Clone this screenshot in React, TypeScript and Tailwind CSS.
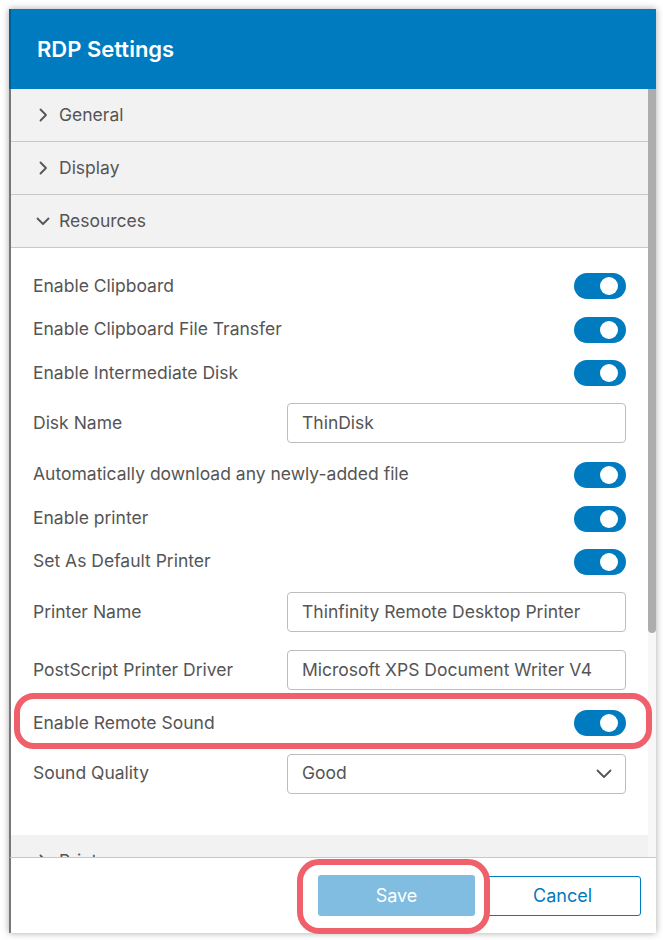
import React from "react";

const font = { fontFamily: "Inter, 'Noto Sans', sans-serif" };

function Chevron({ down = false }: { down?: boolean }) {
  return (
    <svg width="14" height="14" viewBox="0 0 14 14" fill="none" stroke="#555" strokeWidth="1.8" strokeLinecap="round" strokeLinejoin="round">
      {down ? <path d="M1.5 4.5 L7 10 L12.5 4.5" /> : <path d="M4.5 1.5 L10 7 L4.5 12.5" />}
    </svg>
  );
}

function AccHeader({ title, open = false }: { title: string; open?: boolean }) {
  return (
    <div className="h-[53px] shrink-0 bg-[#f2f2f2] border-b border-[#c8c8c8] flex items-center pl-[25px] gap-[9px] text-[17.5px] text-[#555]">
      <Chevron down={open} />
      <span>{title}</span>
    </div>
  );
}

function Toggle() {
  return (
    <div className="w-[52px] h-[26px] rounded-full bg-[#007bc0] flex items-center justify-end pr-[8px]">
      <div className="w-[18px] h-[18px] rounded-full bg-white" />
    </div>
  );
}

function ToggleRow({ label, h }: { label: string; h: string }) {
  return (
    <div className={`flex items-center justify-between ${h}`}>
      <span className="text-[17.5px] text-[#555]">{label}</span>
      <Toggle />
    </div>
  );
}

function InputRow({ label, value, h }: { label: string; value: string; h: string }) {
  return (
    <div className={`flex items-center ${h}`}>
      <span className="w-[254px] shrink-0 text-[17.5px] text-[#555]">{label}</span>
      <div className="flex-1 h-[40px] border border-[#bdbdbd] rounded-[4px] flex items-center pl-[14px] text-[17.5px] text-[#555]">
        {value}
      </div>
    </div>
  );
}

export default function App() {
  return (
    <div className="w-[663px] h-[940px] bg-white pt-[9px] pl-[9px] relative" style={font}>
      <div className="w-[647px] h-[924px] bg-white flex flex-col shadow-[0_0_7px_rgba(0,0,0,0.35)]">
        <div className="h-[80px] shrink-0 bg-[#007bc0] border-l-2 border-[#005f95] flex items-center pl-[26px] text-white text-[22px] font-semibold">
          RDP Settings
        </div>
        <div className="flex-1 flex overflow-hidden border-l-2 border-[#777]">
          <div className="flex-1 flex flex-col overflow-hidden">
            <AccHeader title="General" />
            <AccHeader title="Display" />
            <AccHeader title="Resources" open />
            <div className="shrink-0 flex flex-col pt-[16px] px-[22px] pb-[34px]">
              <ToggleRow label="Enable Clipboard" h="h-[44px]" />
              <ToggleRow label="Enable Clipboard File Transfer" h="h-[43px]" />
              <ToggleRow label="Enable Intermediate Disk" h="h-[44px]" />
              <InputRow label="Disk Name" value="ThinDisk" h="h-[56px]" />
              <ToggleRow label="Automatically download any newly-added file" h="h-[47px]" />
              <ToggleRow label="Enable printer" h="h-[41px]" />
              <ToggleRow label="Set As Default Printer" h="h-[45px]" />
              <InputRow label="Printer Name" value="Thinfinity Remote Desktop Printer" h="h-[56px]" />
              <InputRow label="PostScript Printer Driver" value="Microsoft XPS Document Writer V4" h="h-[60px]" />
              <ToggleRow label="Enable Remote Sound" h="h-[46px]" />
              <div className="flex items-center h-[55px]">
                <span className="w-[254px] shrink-0 text-[17.5px] text-[#555]">Sound Quality</span>
                <div className="flex-1 h-[40px] border border-[#bdbdbd] rounded-[4px] flex items-center justify-between pl-[14px] pr-[13px] text-[17.5px] text-[#555]">
                  <span>Good</span>
                  <svg width="16" height="10" viewBox="0 0 16 10" fill="none" stroke="#555" strokeWidth="1.8" strokeLinecap="round" strokeLinejoin="round">
                    <path d="M1.5 1.5 L8 8 L14.5 1.5" />
                  </svg>
                </div>
              </div>
            </div>
            <AccHeader title="Printer" />
          </div>
          <div className="w-[8px] shrink-0 bg-[#f7f7f7]">
            <div className="h-[544px] bg-[#adadad] rounded-b-[4px]" />
          </div>
        </div>
        <div className="h-[76px] shrink-0 border-t border-[#c8c8c8] border-l-2 border-l-[#777] flex items-center justify-end pr-[15px] gap-[9px]">
          <button className="w-[157px] h-[41px] rounded-[3px] bg-[#80bde0] text-white text-[18px]">Save</button>
          <button className="w-[157px] h-[40px] rounded-[3px] border border-[#007bc0] text-[#007bc0] text-[18px] bg-white">Cancel</button>
        </div>
      </div>
      <div className="absolute left-[14px] top-[693px] w-[638px] h-[56px] rounded-[20px] border-[6px] border-[#f0606a] pointer-events-none" />
      <div className="absolute left-[297px] top-[859px] w-[193px] h-[75px] rounded-[22px] border-[6px] border-[#f0606a] pointer-events-none" />
    </div>
  );
}
